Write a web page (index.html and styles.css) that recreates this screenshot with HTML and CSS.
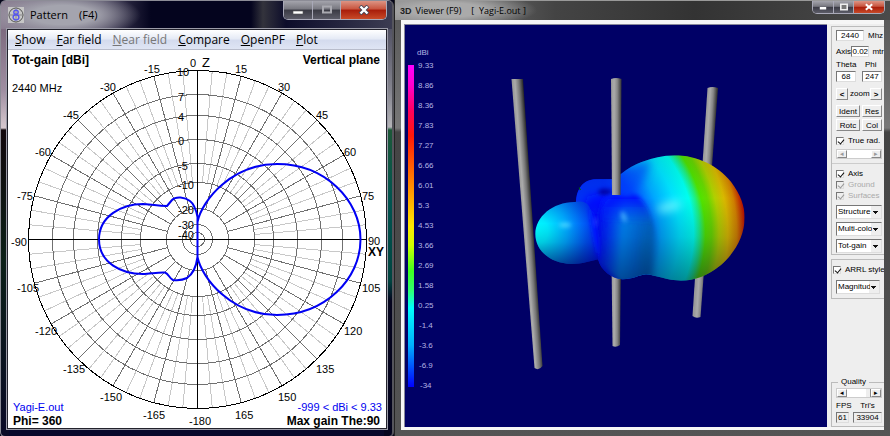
FILE: index.html
```html
<!DOCTYPE html>
<html lang="en">
<head>
<meta charset="utf-8">
<title>Pattern (F4)</title>
<link rel="stylesheet" href="styles.css">
</head>
<body>
<section class="window pattern" aria-label="Pattern">
  <header class="titlebar">
    <svg class="app-icon" viewBox="0 0 16 16" aria-hidden="true"><rect width="16" height="16" fill="#c6c6c6"/><circle cx="8" cy="8" r="7" fill="none" stroke="#555"/><path d="M8 0v16M0 8h16" stroke="#888"/><ellipse cx="8" cy="5.2" rx="2.2" ry="2" fill="none" stroke="#5555ee" stroke-width="1.4"/><ellipse cx="8" cy="10.3" rx="2.9" ry="2.6" fill="none" stroke="#5555ee" stroke-width="1.4"/></svg>
    <h1 class="caption"><span>Pattern</span><span>(F4)</span></h1>
    <div class="caption-buttons">
      <button class="cb min" aria-label="Minimize"><svg viewBox="0 0 12 10"><path d="M1 6h10v3H1z" fill="#fff" stroke="#555" stroke-width=".6"/></svg></button>
      <button class="cb max" aria-label="Maximize"><svg viewBox="0 0 12 10"><path d="M2 1.500h8v6H2z" fill="none" stroke="#a9a9b0" stroke-width="2"/></svg></button>
      <button class="cb close" aria-label="Close"><svg viewBox="0 0 12 10"><path d="M2 1l8 8M10 1L2 9" stroke="#445" stroke-width="4"/><path d="M2.500 1.500l7 7M9.500 1.500l-7 7" stroke="#fff" stroke-width="2.400"/></svg></button>
    </div>
  </header>
  <div class="client">
    <nav class="menu">
      <a href="#"><u>S</u>how</a><a href="#"><u>F</u>ar field</a><a href="#" class="off"><u>N</u>ear field</a><a href="#"><u>C</u>ompare</a><a href="#"><u>O</u>penPF</a><a href="#"><u>P</u>lot</a>
    </nav>
    <svg class="polar" viewBox="8 50 378 378">
      <g id="spokes" shape-rendering="crispEdges"></g>
      <g class="ring" shape-rendering="crispEdges">
        <circle cx="197.500" cy="239.500" r="145"/><circle cx="197.500" cy="239.500" r="124"/><circle cx="197.500" cy="239.500" r="100"/><circle cx="197.500" cy="239.500" r="76"/><circle cx="197.500" cy="239.500" r="57"/><circle cx="197.500" cy="239.500" r="31"/><circle cx="197.500" cy="239.500" r="15"/><circle cx="197.500" cy="239.500" r="7"/>
        <circle class="outer" cx="197.500" cy="239.500" r="169"/>
        <path class="outer" d="M28 239.500H367M197.500 70V409"/>
      </g>
      <path class="trace" d="M197.500 222C202 200 232 164 277 164C325 164 360.500 200 360.500 239.500C360.500 279 325 315 277 315C232 315 202 279 197.500 257V217C196 209 194 204 190 201C185 197 176 196 172 200L167 206C160 206 150 204.500 143 204C122 204 99 216 99 239.500C99 263 122 274 143 274C150 274 158 272 165 272.500C169 274 169 278 173 280C177 280.500 183 280 187 278C193 274 196 268 197.500 257"/>
      <g class="deg">
        <text x="190" y="67">0</text><text x="235" y="73">15</text><text x="278" y="91">30</text><text x="316" y="119">45</text><text x="344" y="156">60</text><text x="362" y="200">75</text><text x="368" y="245">90</text><text x="362" y="292">105</text><text x="344" y="335">120</text><text x="316" y="373">135</text><text x="278" y="401">150</text><text x="235" y="419">165</text><text x="189" y="425">-180</text>
        <text x="143" y="419">-165</text><text x="100" y="401">-150</text><text x="63" y="373">-135</text><text x="35" y="335">-120</text><text x="17" y="292">-105</text><text x="11" y="246">-90</text><text x="17" y="200">-75</text><text x="35" y="156">-60</text><text x="63" y="119">-45</text><text x="100" y="91">-30</text><text x="144" y="73">-15</text>
        <text x="177" y="76">10</text><text x="178" y="101">7</text><text x="178" y="121">4</text><text x="178" y="145">0</text><text x="178" y="170">-5</text><text x="178" y="189">-10</text><text x="178" y="214">-20</text><text x="178" y="229">-30</text><text x="178" y="239">-40</text>
        <text x="12" y="92">2440 MHz</text><text class="axis" x="202" y="67">Z</text>
      </g>
      <g class="strong"><text x="12" y="64">Tot-gain [dBi]</text><text x="380" y="64" text-anchor="end">Vertical plane</text><text x="13" y="425">Phi= 360</text><text x="380" y="425" text-anchor="end">Max gain The:90</text><text x="368" y="256">XY</text></g>
      <g class="note"><text x="13" y="411">Yagi-E.out</text><text x="382" y="411" text-anchor="end">-999 &lt; dBi &lt; 9.33</text></g>
    </svg>
  </div>
</section>

<section class="window viewer" aria-label="3D Viewer">
  <header class="titlebar">
    <b class="mark">3D</b>
    <h1 class="caption"><span>Viewer (F9)</span><span>[&nbsp; Yagi-E.out ]</span></h1>
    <div class="caption-buttons">
      <button class="cb min" aria-label="Minimize"><svg viewBox="0 0 12 10"><path d="M2 5h8v3H2z" fill="#fff"/></svg></button>
      <button class="cb max" aria-label="Maximize"><svg viewBox="0 0 12 10"><path d="M2 1.500h8v7H2z" fill="#777" stroke="#eee" stroke-width="2"/></svg></button>
      <button class="cb close" aria-label="Close"><svg viewBox="0 0 12 10"><path d="M2 1.500l8 7M10 1.500l-8 7" stroke="#fff" stroke-width="2.500"/></svg></button>
    </div>
  </header>
  <div class="client">
    <svg class="scene" viewBox="404 26 422 400">
      <defs>
        <linearGradient id="scale" x2="0" y2="1"><stop offset="0" stop-color="#f0f"/><stop offset=".06" stop-color="#ff00d0"/><stop offset=".14" stop-color="#ff0060"/><stop offset=".22" stop-color="#ff1808"/><stop offset=".36" stop-color="#ff8000"/><stop offset=".5" stop-color="#ffe800"/><stop offset=".56" stop-color="#d0ff00"/><stop offset=".64" stop-color="#40ff20"/><stop offset=".7" stop-color="#30ff70"/><stop offset=".755" stop-color="#0ff"/><stop offset=".87" stop-color="#00b0ff"/><stop offset=".94" stop-color="#0050ff"/><stop offset="1" stop-color="#00f"/></linearGradient>
        <linearGradient id="rodL" gradientUnits="userSpaceOnUse" x1="511" y1="79" x2="522" y2="78.200"><stop offset="0" stop-color="#999"/><stop offset=".25" stop-color="#aaa"/><stop offset=".6" stop-color="#777"/><stop offset="1" stop-color="#222"/></linearGradient>
        <linearGradient id="rodM"><stop offset="0" stop-color="#999"/><stop offset=".3" stop-color="#aaa"/><stop offset=".6" stop-color="#888"/><stop offset="1" stop-color="#333"/></linearGradient>
        <linearGradient id="rodR" gradientUnits="userSpaceOnUse" x1="706.500" y1="87" x2="716.500" y2="87.600"><stop offset="0" stop-color="#999"/><stop offset=".3" stop-color="#aaa"/><stop offset=".6" stop-color="#888"/><stop offset="1" stop-color="#333"/></linearGradient>
        <radialGradient id="gain" gradientUnits="userSpaceOnUse" cx="170" cy="310" r="540"><stop offset=".3" stop-color="#0014ff"/><stop offset=".42" stop-color="#0048ff"/><stop offset=".52" stop-color="#00a8ff"/><stop offset=".62" stop-color="#00e4ff"/><stop offset=".7" stop-color="#00ffee"/><stop offset=".735" stop-color="#20f080"/><stop offset=".765" stop-color="#50e400"/><stop offset=".8" stop-color="#68d800"/><stop offset=".84" stop-color="#b0d000"/><stop offset=".89" stop-color="#d8b800"/><stop offset=".94" stop-color="#d08000"/><stop offset=".985" stop-color="#b81400"/></radialGradient>
        <linearGradient id="shade" x2="0" y2="1"><stop offset="0" stop-color="#002" stop-opacity=".1"/><stop offset=".35" stop-color="#002" stop-opacity="0"/><stop offset=".65" stop-color="#002" stop-opacity=".14"/><stop offset="1" stop-color="#002" stop-opacity=".45"/></linearGradient>
        <radialGradient id="back" gradientUnits="userSpaceOnUse" cx="70" cy="305" r="205"><stop offset="0" stop-color="#0ff"/><stop offset=".2" stop-color="#00ecff"/><stop offset=".48" stop-color="#00a8ff"/><stop offset=".78" stop-color="#0050f4"/><stop offset="1" stop-color="#0018ff"/></radialGradient>
        <linearGradient id="mid" gradientUnits="userSpaceOnUse" x1="255" y1="300" x2="450" y2="315"><stop offset="0" stop-color="#0008ff"/><stop offset=".18" stop-color="#0030ff"/><stop offset=".42" stop-color="#0088f8"/><stop offset=".65" stop-color="#0070e0"/><stop offset=".85" stop-color="#0068c8"/><stop offset="1" stop-color="#0098dc" stop-opacity="0"/></linearGradient>
        <linearGradient id="midTop" gradientUnits="userSpaceOnUse" x1="0" y1="195" x2="0" y2="285"><stop offset="0" stop-color="#00f"/><stop offset="1" stop-color="#0040ff" stop-opacity="0"/></linearGradient>
        <filter id="soft" x="-1" y="-1" width="3" height="3"><feGaussianBlur stdDeviation="12"/></filter>
        <filter id="fine" x="-1" y="-1" width="3" height="3"><feGaussianBlur stdDeviation="6"/></filter>
        <clipPath id="lobe"><path d="M195 216C196 180 215 148 255 148H303L330 132Q360 108 390 97Q440 77 490 76C560 76 620 108 660 155C690 195 701 230 701 262C701 320 670 370 630 405C590 438 550 452 510 452C470 452 430 434 405 433C380 436 365 448 335 448C300 446 270 420 262 390Z"/></clipPath>
      </defs>
      <rect x="404" y="26" width="422" height="400" fill="#000066"/>
      <rect x="407" y="65" width="6" height="322" fill="url(#scale)"/>
      <g class="legend"><text x="416" y="55">dBi</text><text x="417" y="68">9.33</text><text x="417" y="88">8.86</text><text x="417" y="108">8.36</text><text x="417" y="128">7.83</text><text x="417" y="148">7.27</text><text x="417" y="168">6.66</text><text x="417" y="188">6.01</text><text x="417" y="208">5.3</text><text x="417" y="228">4.53</text><text x="417" y="248">3.66</text><text x="417" y="268">2.69</text><text x="417" y="288">1.58</text><text x="417" y="308">0.25</text><text x="418" y="328">-1.4</text><text x="418" y="348">-3.6</text><text x="418" y="368">-6.9</text><text x="419" y="388">-34</text></g>
      <path fill="url(#rodL)" d="M510.500 79H522L541.500 366Q538 371 533.500 368Z"/>
      <path fill="url(#rodR)" d="M706.500 88Q711 86 717 88L699.500 317Q695 319 691.500 316Z"/>
      <path fill="url(#rodM)" d="M610.500 260H620L619 345Q615 348 611.500 346Z"/>
      <g transform="translate(510 130) scale(.3333)">
        <g clip-path="url(#lobe)">
          <rect x="190" y="70" width="515" height="385" fill="url(#gain)"/>
          <path d="M195 216Q198 150 255 148H310V240H195Z" fill="#0030f4"/>
          <path d="M215 245L230 200L310 180V260Z" fill="#0010ff" filter="url(#soft)"/>
          <ellipse cx="285" cy="186" rx="24" ry="9" fill="#0000a0" filter="url(#fine)"/>
          <path d="M300 130L420 90L400 150L360 200H300Z" fill="#0040ff" opacity=".6" filter="url(#soft)"/>
          <path d="M265 400C250 320 250 250 280 205Q300 192 350 197C410 202 430 280 440 340L435 445L330 455Z" fill="url(#mid)" filter="url(#fine)"/>
          <path d="M270 270Q275 205 310 196H375Q410 215 420 285Z" fill="url(#midTop)" filter="url(#fine)"/>
          <path d="M405 290Q430 390 405 450Q385 420 390 360Z" fill="#0070b8" opacity=".6" filter="url(#soft)"/>
          <rect x="190" y="70" width="515" height="385" fill="url(#shade)"/>
          <ellipse cx="475" cy="230" rx="38" ry="14" transform="rotate(-15 475 230)" fill="#8ff" opacity=".7" filter="url(#soft)"/>
          <ellipse cx="338" cy="260" rx="7" ry="17" transform="rotate(-20 338 260)" fill="#5bf" opacity=".8" filter="url(#fine)"/>
        </g>
        <path d="M73 312C73 260 125 217 190 216Q225 210 235 230C255 270 258 340 263 388C235 394 215 402 182 402C115 400 73 360 73 312Z" fill="url(#back)"/>
        <path d="M73 312C73 260 125 217 190 216Q225 210 235 230C255 270 258 340 263 388C235 394 215 402 182 402C115 400 73 360 73 312Z" fill="url(#shade)"/>
        <ellipse cx="162" cy="285" rx="18" ry="7" fill="#7ef" opacity=".6" filter="url(#fine)"/>
        <path d="M228 215Q270 280 263 390Q245 320 235 235Z" fill="#0014ff" filter="url(#fine)"/>
        <ellipse cx="254" cy="276" rx="3" ry="14" fill="#35f" filter="url(#fine)"/>
        <path d="M203 171l3 2 4 6-4 2z" fill="#060"/>
      </g>
      <path fill="url(#rodM)" d="M610 79Q615 77 620.500 79L619.500 195H611Z"/>
    </svg>
    <form class="panel">
      <div class="group main">
        <label class="row"><input class="field w28" value="2440">Mhz</label>
        <label class="row axis-row">Axis<input class="field w19" value="0.02"><span>mtr</span></label>
        <div class="row pair"><label>Theta<input class="field w20" value="68"></label><label>Phi<input class="field w20" value="247"></label></div>
        <div class="row zoom"><button type="button" aria-label="Zoom out">&lt;</button><span>zoom</span><button type="button" aria-label="Zoom in">&gt;</button></div>
        <div class="keys"><button type="button">Ident</button><button type="button">Res</button><button type="button">Rotc</button><button type="button">Col</button></div>
        <label class="check"><input type="checkbox" checked>True rad.</label>
        <div class="scroll dim"><button type="button" aria-label="Left">◂</button><input type="range" aria-label="Radius" value="50"><button type="button" aria-label="Right">▸</button></div>
        <hr>
        <label class="check"><input type="checkbox" checked>Axis</label>
        <label class="check"><input type="checkbox" checked disabled>Ground</label>
        <label class="check"><input type="checkbox" checked disabled>Surfaces</label>
        <div class="selects">
          <select aria-label="Structure"><option>Structure</option></select>
          <select aria-label="Colour"><option>Multi-color</option></select>
          <select aria-label="Quantity"><option>Tot-gain</option></select>
        </div>
      </div>
      <div class="group arrl">
        <label class="check"><input type="checkbox" checked>ARRL style</label>
        <select aria-label="Scale"><option>Magnitude</option></select>
      </div>
      <fieldset class="group quality">
        <legend>Quality</legend>
        <div class="scroll"><button type="button" aria-label="Less">◂</button><input type="range" aria-label="Quality" value="100"><button type="button" aria-label="More">▸</button></div>
        <div class="stats"><label>FPS<output class="field">61</output></label><label>Tri's<output class="field">33904</output></label></div>
      </fieldset>
    </form>
  </div>
</section>
<script src="spokes.js"></script>
</body>
</html>
```
FILE: styles.css
```css
* { box-sizing: border-box; }
body {
  margin: 0;
  min-height: 100vh;
  display: grid;
  grid-template-columns: 394fr 496fr;
  background: #05051a;
  font-family: "Liberation Sans", Arial, sans-serif;
  color: #000;
}
button, input, select { font: inherit; color: inherit; margin: 0; }
button { padding: 0; }
h1 { margin: 0; font-weight: 400; }

.window { display: flex; flex-direction: column; min-width: 0; overflow: hidden; }
.titlebar { display: flex; align-items: center; }
.caption { display: flex; flex: 1; white-space: nowrap; }
.caption-buttons { display: flex; align-self: flex-start; overflow: hidden; border: 1px solid #a9a9b8; border-top: 0; border-radius: 0 0 5px 5px; }
.cb { display: grid; place-items: center; border: 0; border-left: 1px solid #a9a9b8; background: linear-gradient(#a4a4ac, #77777f 45%, #3a3a44 50%, #5c5c68); }
.cb:first-child { border-left: 0; }
.cb svg { width: 12px; height: 10px; }
.cb.close { background: linear-gradient(#dd9484, #c8543e 45%, #a81c0a 50%, #c84a28); }

/* Pattern window */
.pattern {
  padding: 0 5px 7px 6px;
  border: 1px solid #8c8c96;
  border-right: 2px solid #55555c;
  border-radius: 6px 6px 5px 5px;
  background:
    linear-gradient(#6d5a70, #a08fa2 90px, #d6c8ce 127px, #12080c 129px, #0c2018 260px, #0a0a26) left / 8px 100% no-repeat,
    linear-gradient(#3c3c52, #85858f 90px, #b4b4b8 126px, #1d5838 129px, #005450 200px, #004440 280px, #04041e 300px) right / 8px 100% no-repeat,
    #07072a;
}
.pattern .titlebar {
  height: 28px;
  margin: 0 -5px 0 -6px;
  padding-left: 7px;
  background: radial-gradient(ellipse 78px 24px at 62px 14px, #a4a4ae 40%, transparent), linear-gradient(90deg, #8a7c90, #4d4760 100px, #04041e 150px, #04041e 250px, #33333c 262px, #0c0c2a 285px, #3c3c52);
}
.app-icon { width: 16px; height: 16px; }
.pattern .caption { font: 11px/20px "Open Sans", sans-serif; gap: 11px; padding-left: 6px; }
.pattern .caption-buttons { margin-right: 5px; height: 19px; }
.pattern .cb { width: 28px; }
.pattern .cb.close { width: 46px; }
.pattern .client { flex: 1; display: flex; flex-direction: column; background: #fff; border: 1px solid #22222c; outline: 1px solid #9c9ca8; }
.menu { display: flex; gap: 11px; height: 20px; padding: 0 7px; background: linear-gradient(#fff, #e6ebf6 45%, #d4dbee 55%, #dfe5f4); border-bottom: 1px solid #b8bccb; font: 12px/20px "Open Sans", sans-serif; white-space: nowrap; }
.menu a { color: #000; text-decoration: none; }
.menu .off { color: #777; }
.polar { display: block; width: 100%; flex: 1; min-height: 0; }
.ring { fill: none; stroke: #707070; }
.ring .outer { stroke: #000; }
.major { stroke: #707070; }
.minor { stroke: #c8c8c8; }
.trace { fill: none; stroke: #0000f4; stroke-width: 2; stroke-linejoin: round; }
.deg, .note { font-size: 11px; }
.axis { font-size: 13px; }
.strong { font-size: 12px; font-weight: 700; }
.note { fill: #0000f0; }

/* Viewer window */
.viewer { padding: 0 6px 7px 6px; border-left: 1px solid #222; background: linear-gradient(#555, #777 128px, #444 132px, #555); font-size: 8px; }
.viewer .titlebar { height: 20px; margin: 0 -6px; padding-left: 5px; border-top: 1px solid #999; background: radial-gradient(ellipse 90px 18px at 52px 9px, #aaa 40%, transparent), linear-gradient(90deg, #888, #444 160px, #333 300px, #4a4a4a); }
.mark { font-size: 9px; color: #222; }
.viewer .caption { font: 9px/12px "Open Sans", sans-serif; gap: 10px; padding-left: 4px; }
.viewer .caption-buttons { margin-right: 5px; height: 13px; }
.viewer .cb { width: 20px; }
.viewer .cb svg { height: 8px; }
.viewer .cb.close { width: 31px; }
.viewer .client { flex: 1; display: flex; min-height: 0; background: #eee; border: 2px solid #f6f6f6; border-width: 4px 0 3px 3px; overflow: hidden; }
.scene { flex: 1; min-width: 0; width: 0; border: 1px solid #889; border-width: 1px 0 0 1px; background: #000066; }
.legend { fill: #b4b4e4; font-size: 8px; }

.panel { flex: 0 0 57px; display: flex; flex-direction: column; padding: 2px 0 0 4px; line-height: 10px; white-space: nowrap; overflow: hidden; }
.group { border: 1px solid #bbb; border-right: 0; padding: 0 0 0 4px; margin: 0; min-width: 0; }
.row { display: flex; align-items: center; gap: 4px; }
.field { display: block; height: 11px; padding: 0 1px; border: 1px solid #777; border-right-color: #ddd; border-bottom-color: #ddd; background: #fff; text-align: center; line-height: 9px; border-radius: 0; min-width: 0; }
.w28 { width: 28px; } .w19 { width: 19px; padding: 0; } .w20 { width: 20px; }
.main { padding-top: 3px; }
.axis-row { gap: 0; margin-top: 5px; }
.axis-row span { margin-left: 3px; }
.pair { gap: 6px; margin-top: 3px; }
.pair label { width: 20px; }
.pair label + label { text-indent: 3px; }
.pair label + label .field { text-indent: 0; }
.pair .field { margin-top: 1px; }
.panel button { border: 1px solid #fff; border-right-color: #888; border-bottom-color: #888; background: #eee; line-height: 9px; }
.zoom { gap: 2px; margin-top: 6px; }
.zoom button { width: 12px; height: 12px; font-weight: 700; flex: none; }
.zoom span { width: 18px; }
.keys { display: grid; grid-template-columns: 24px 20px; gap: 2px; margin: 5px 0 4px; }
.keys button { height: 12px; }
.check { display: flex; align-items: center; gap: 4px; height: 11px; }
.check input { appearance: none; width: 8px; height: 8px; flex: none; border: 1px solid #777; border-right-color: #ddd; border-bottom-color: #ddd; background: #fff; position: relative; }
.check input:checked::after { content: ""; position: absolute; left: 2px; top: 0; width: 3px; height: 5px; border: solid #111; border-width: 0 1px 1px 0; transform: rotate(40deg); }
.check:has(:disabled) { color: #aaa; }
.check input:disabled { background: #eee; }
.check input:disabled::after { border-color: #999; }
.scroll { display: flex; width: 46px; height: 10px; margin-top: 3px; background: #fff; border: 1px solid #ccc; }
.scroll button { width: 10px; flex: none; font-size: 7px; line-height: 6px; }
.scroll input { appearance: none; flex: 1; min-width: 0; height: 8px; background: #fff; }
.scroll input::-webkit-slider-thumb { appearance: none; width: 5px; height: 8px; background: #eee; border-right: 1px solid #888; }
.dim input::-webkit-slider-thumb { opacity: 0; }
.dim button { color: #999; }
hr { border: 0; border-top: 1px solid #ccc; margin: 4px 0 4px -4px; }
.selects { display: flex; flex-direction: column; gap: 3px; padding: 4px 0 1px; }
select { display: block; appearance: none; width: 46px; height: 14px; padding: 0 9px 0 1px; border: 1px solid #777; border-right-color: #ddd; border-bottom-color: #ddd; border-radius: 0; overflow: hidden;
  background: linear-gradient(#111, #111) right 3px top 5px / 5px 1px no-repeat, linear-gradient(#111, #111) right 4px top 6px / 3px 1px no-repeat, linear-gradient(#111, #111) right 5px top 7px / 1px 1px no-repeat, linear-gradient(90deg, #fff calc(100% - 10px), #eee 0); }
.arrl { margin-top: 4px; padding: 4px 0 4px 1px; }
.arrl select { margin: 5px 0 0 3px; width: 44px; }
.quality { margin-top: auto; padding-bottom: 3px; }
.quality legend { padding: 0 3px; margin-left: 2px; height: 10px; }
.quality .scroll { margin-top: 1px; }
.stats { display: flex; gap: 4px; margin-top: 3px; }
.stats label:first-child { width: 13px; }
.stats label:last-child { width: 29px; text-align: center; }
.stats .field { margin-top: 1px; background: #eee; }
```
FILE: spokes.js
```js
// Radial grid: a strong spoke every 15 degrees, a faint one every 5.
const group = document.getElementById("spokes");
const cx = 197.5, cy = 239.5, outer = 169;
function spoke(deg, inner, name) {
  const a = deg * Math.PI / 180;
  const line = document.createElementNS("http://www.w3.org/2000/svg", "line");
  line.setAttribute("x1", cx + inner * Math.sin(a));
  line.setAttribute("y1", cy - inner * Math.cos(a));
  line.setAttribute("x2", cx + outer * Math.sin(a));
  line.setAttribute("y2", cy - outer * Math.cos(a));
  line.setAttribute("class", name);
  group.append(line);
}
for (let d = 0; d < 360; d += 5) {
  if (d % 15) spoke(d, 57, "minor");
}
for (let d = 0; d < 360; d += 15) spoke(d, 31, "major");
```
